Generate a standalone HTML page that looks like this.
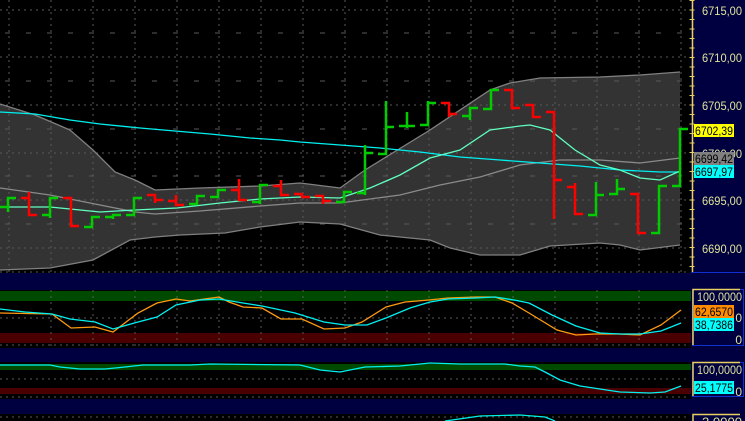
<!DOCTYPE html>
<html><head><meta charset="utf-8"><style>
html,body{margin:0;padding:0;background:#000040;}
svg{display:block}
text{font-family:"Liberation Sans",sans-serif;font-size:12px;}
</style></head><body>
<svg width="745" height="421" viewBox="0 0 745 421" xmlns="http://www.w3.org/2000/svg">
<rect width="745" height="421" fill="#000040"/>
<rect x="0" y="0" width="691" height="273" fill="#000"/>
<polygon fill="#333" points="0,104 35,115 70,130 93,150 115,172 135,180 155,190 200,188 260,186 300,183 340,188 365,170 430,130 490,90 510,83 540,78 600,77 640,75 680,72 680,245 640,250 620,245 600,243 550,246 520,255 480,255 450,248 430,240 380,235 340,224 300,222 260,227 225,233 180,235 155,237 130,240 93,260 50,268 0,270"/>
<g stroke="#5a5a5a" stroke-width="1" fill="none">
<g stroke-dasharray="2,4">
<line x1="0" y1="10" x2="690" y2="10"/><line x1="0" y1="57" x2="690" y2="57"/><line x1="0" y1="105" x2="690" y2="105"/><line x1="0" y1="153" x2="690" y2="153"/><line x1="0" y1="200" x2="690" y2="200"/><line x1="0" y1="248" x2="690" y2="248"/><line x1="0" y1="272" x2="690" y2="272"/>
<line x1="9" y1="0" x2="9" y2="273"/><line x1="51" y1="0" x2="51" y2="273"/><line x1="93" y1="0" x2="93" y2="273"/><line x1="135" y1="0" x2="135" y2="273"/><line x1="177" y1="0" x2="177" y2="273"/><line x1="219" y1="0" x2="219" y2="273"/><line x1="261" y1="0" x2="261" y2="273"/><line x1="303" y1="0" x2="303" y2="273"/><line x1="345" y1="0" x2="345" y2="273"/><line x1="387" y1="0" x2="387" y2="273"/><line x1="429" y1="0" x2="429" y2="273"/><line x1="471" y1="0" x2="471" y2="273"/><line x1="513" y1="0" x2="513" y2="273"/><line x1="555" y1="0" x2="555" y2="273"/><line x1="597" y1="0" x2="597" y2="273"/><line x1="639" y1="0" x2="639" y2="273"/><line x1="681" y1="0" x2="681" y2="273"/>
</g>
<g stroke-dasharray="5,16">
<line x1="5" y1="33" x2="690" y2="33"/><line x1="5" y1="81" x2="690" y2="81"/><line x1="5" y1="129" x2="690" y2="129"/><line x1="5" y1="176" x2="690" y2="176"/><line x1="5" y1="224" x2="690" y2="224"/>
</g>
</g>
<g fill="none" stroke-width="1.3">
<polyline stroke="#808080" points="0,104 35,115 70,130 93,150 115,172 135,180 155,190 200,188 260,186 300,183 340,188 365,170 430,130 490,90 510,83 540,78 600,77 640,75 680,72"/>
<polyline stroke="#808080" points="0,270 50,268 93,260 130,240 155,237 180,235 225,233 260,227 300,222 340,224 380,235 430,240 450,248 480,255 520,255 550,246 600,243 620,245 640,250 680,245"/>
<polyline stroke="#8a8a8a" points="0,188 50,195 100,205 135,212 155,214 200,211 260,206 300,203 340,203 400,195 440,185 480,177 520,165 560,160 600,160 640,163 680,158"/>
<polyline stroke="#00f0f0" points="0,112 35,114 70,120 100,124 140,128 175,131 210,134 250,138 280,140 300,142 340,145 380,148 420,152 460,157 500,160 540,163 580,166 620,170 660,172 680,172"/>
<polyline stroke="#60ffc0" points="0,207 50,207 100,212 135,210 177,208 220,203 260,199 300,197 340,198 370,188 400,175 430,158 460,150 490,130 520,126 530,125 550,130 575,150 600,165 620,170 640,178 660,180 680,171"/>
</g>
<g fill="none" stroke-width="2.5">
<path stroke="#00cc00" d="M0 207H8V198H16M8 197V212 M42 215H50V198H58M50 198V218 M84 227H92V217H100M92 217V227 M105 217H113V215H121M113 214V219 M126 215H134V198H142M134 197V216 M189 204H197V196H205M197 195V205 M210 197H218V190H226M218 190V197 M252 202H260V185H268M260 184V204 M336 202H344V192H352M344 192V203 M357 193H365V153H373M365 145V195 M378 154H386V127H394M386 101V154 M399 126H407V126H415M407 112V128 M420 125H428V103H436M428 101V125 M462 116H470V108H478M470 108V120 M483 109H491V90H499M491 90V109 M588 215H596V195H604M596 182V215 M609 194H617V189H625M617 179V195 M651 233H659V186H667M659 186V233 M672 186H680V129H688M680 129V186"/>
<path stroke="#ff0000" d="M21 198H29V215H37M29 192V215 M63 198H71V226H79M71 198V226 M147 195H155V200H163M155 195V203 M168 201H176V205H184M176 195V206 M231 190H239V200H247M239 179V201 M273 186H281V195H289M281 180V195 M294 194H302V197H310M302 194V197 M315 196H323V201H331M323 196V204 M441 103H449V114H457M449 103V117 M504 90H512V108H520M512 90V108 M525 105H533V117H541M533 105V117 M546 112H554V180H562M554 112V219 M567 187H575V214H583M575 183V214 M630 194H638V233H646M638 194V233"/>
</g>
<rect x="691" y="0" width="54" height="273" fill="#000040"/>
<line x1="692.5" y1="0" x2="692.5" y2="272" stroke="#e8d060" stroke-width="1.5"/>
<line x1="691" y1="272.5" x2="745" y2="272.5" stroke="#1030d0"/>
<line x1="692" y1="0" x2="692" y2="272" stroke="#e8d060" stroke-width="5" stroke-dasharray="1,8.5"/>
<g fill="#dfe39a">
<text x="702" y="15" textLength="40" lengthAdjust="spacingAndGlyphs">6715,00</text><text x="702" y="62" textLength="40" lengthAdjust="spacingAndGlyphs">6710,00</text><text x="702" y="110" textLength="40" lengthAdjust="spacingAndGlyphs">6705,00</text><text x="702" y="158" textLength="40" lengthAdjust="spacingAndGlyphs">6700,00</text><text x="702" y="205" textLength="40" lengthAdjust="spacingAndGlyphs">6695,00</text><text x="702" y="253" textLength="40" lengthAdjust="spacingAndGlyphs">6690,00</text>
</g>
<rect x="694" y="124" width="40" height="13" fill="#ffff00"/><text x="695" y="135" fill="#000" textLength="38" lengthAdjust="spacingAndGlyphs">6702,39</text>
<rect x="694" y="152" width="40" height="13" fill="#808080"/><text x="695" y="163" fill="#000" textLength="38" lengthAdjust="spacingAndGlyphs">6699,42</text>
<rect x="694" y="165" width="40" height="13" fill="#00ffff"/><text x="695" y="176" fill="#000" textLength="38" lengthAdjust="spacingAndGlyphs">6697,97</text>

<rect x="0" y="290" width="691" height="58" fill="#000"/>
<rect x="0" y="291" width="691" height="10" fill="#004a00"/>
<rect x="0" y="333" width="691" height="10" fill="#4a0000"/>
<g stroke="#5a5a5a" stroke-dasharray="2,4"><line x1="0" y1="318" x2="690" y2="318"/><line x1="0" y1="345" x2="690" y2="345"/><line x1="51" y1="290" x2="51" y2="348"/><line x1="93" y1="290" x2="93" y2="348"/><line x1="135" y1="290" x2="135" y2="348"/><line x1="177" y1="290" x2="177" y2="348"/><line x1="219" y1="290" x2="219" y2="348"/><line x1="261" y1="290" x2="261" y2="348"/><line x1="303" y1="290" x2="303" y2="348"/><line x1="345" y1="290" x2="345" y2="348"/><line x1="387" y1="290" x2="387" y2="348"/><line x1="429" y1="290" x2="429" y2="348"/><line x1="471" y1="290" x2="471" y2="348"/><line x1="513" y1="290" x2="513" y2="348"/><line x1="555" y1="290" x2="555" y2="348"/><line x1="597" y1="290" x2="597" y2="348"/><line x1="639" y1="290" x2="639" y2="348"/></g>
<polyline fill="none" stroke="#ff9a10" stroke-width="1.3" points="0,313 52,314 71,328 95,327 113,332 138,313 157,303 176,299 190,301 219,297 229,302 243,307 262,308 281,319 302,319 324,329 345,328 362,322 386,307 405,302 429,300 448,298 476,297 495,297 512,303 529,313 557,330 576,335 595,334 619,334 640,335 661,325 681,310"/>
<polyline fill="none" stroke="#00f0f0" stroke-width="1.3" points="0,309 25,312 52,314 70,319 95,322 113,329 138,322 157,317 176,305 200,300 219,299 243,303 262,306 295,313 324,322 345,325 367,325 386,318 410,308 430,302 448,299 476,298 495,297 514,300 529,303 552,315 576,326 600,333 620,334 640,334 661,331 681,323"/>
<rect x="692.5" y="289.5" width="51" height="56" fill="none" stroke="#1030d0"/>
<path d="M693 345V289.5H740" fill="none" stroke="#e8d060" stroke-width="1.5"/>
<text x="697" y="301" fill="#dfe39a" textLength="45" lengthAdjust="spacingAndGlyphs">100,0000</text>
<rect x="694" y="305" width="40" height="13" fill="#ff8c00"/><text x="695" y="316" fill="#000" textLength="38" lengthAdjust="spacingAndGlyphs">62,6570</text>
<rect x="694" y="318" width="40" height="13" fill="#00ffff"/><text x="695" y="329" fill="#000" textLength="38" lengthAdjust="spacingAndGlyphs">38,7386</text>
<text x="742" y="322" fill="#dfe39a" text-anchor="end">0</text>
<text x="742" y="344" fill="#dfe39a" text-anchor="end">0</text>

<rect x="0" y="362" width="691" height="37" fill="#000"/>
<rect x="0" y="364" width="691" height="6" fill="#004a00"/>
<rect x="0" y="388" width="691" height="6" fill="#4a0000"/>
<g stroke="#5a5a5a" stroke-dasharray="2,4"><line x1="0" y1="379" x2="690" y2="379"/><line x1="0" y1="397" x2="690" y2="397"/></g>
<polyline fill="none" stroke="#00f0f0" stroke-width="1.3" points="0,365 50,365 60,367 80,369 105,369 125,367 143,365 190,365 210,364 300,365 320,370 340,372 365,367 400,366 430,363 460,364 505,364 520,366 535,367 545,372 560,380 580,386 600,389 620,392 650,393 665,392 681,386"/>
<rect x="692.5" y="362.5" width="51" height="34" fill="none" stroke="#1030d0"/>
<path d="M693 396V362.5H740" fill="none" stroke="#e8d060" stroke-width="1.5"/>
<text x="697" y="374" fill="#dfe39a" textLength="45" lengthAdjust="spacingAndGlyphs">100,0000</text>
<rect x="694" y="381" width="40" height="13" fill="#00ffff"/><text x="695" y="392" fill="#000" textLength="38" lengthAdjust="spacingAndGlyphs">25,1775</text>
<text x="742" y="396" fill="#dfe39a" text-anchor="end">0</text>

<rect x="0" y="414" width="691" height="7" fill="#000"/>
<line x1="0" y1="417" x2="690" y2="417" stroke="#5a5a5a" stroke-dasharray="2,4"/>
<polyline fill="none" stroke="#00f0f0" stroke-width="1.3" points="445,421 480,416 520,415 545,417 555,421"/>
<path d="M693 421V414.5H740" fill="none" stroke="#e8d060" stroke-width="1.5"/>
<text x="702" y="426" fill="#dfe39a" textLength="40" lengthAdjust="spacingAndGlyphs">2,0000</text>
</svg>
</body></html>
